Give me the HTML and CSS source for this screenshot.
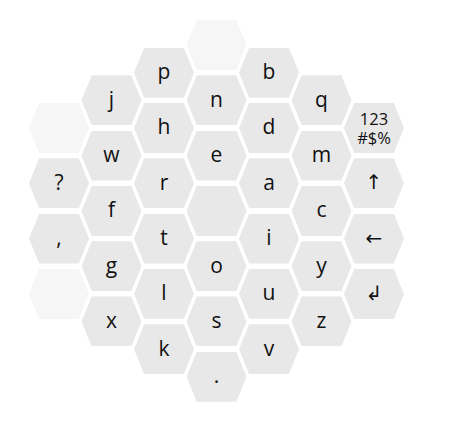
FILE: index.html
```html
<!DOCTYPE html>
<html lang="en">
<head>
    <meta charset="UTF-8">
    <meta name="viewport" content="width=device-width, initial-scale=1.0">
    <title>Hex Keyboard</title>
    <link rel="stylesheet" href="styles.css">
</head>
<body>
    <div class="board">
        <div class="col col-edge">
            <div class="hex hex-faint"></div>
            <div class="hex">?</div>
            <div class="hex">,</div>
            <div class="hex hex-faint"></div>
        </div>
        <div class="col col-side">
            <div class="hex">j</div>
            <div class="hex">w</div>
            <div class="hex">f</div>
            <div class="hex">g</div>
            <div class="hex">x</div>
        </div>
        <div class="col col-inner">
            <div class="hex">p</div>
            <div class="hex">h</div>
            <div class="hex">r</div>
            <div class="hex">t</div>
            <div class="hex">l</div>
            <div class="hex">k</div>
        </div>
        <div class="col col-center">
            <div class="hex hex-faint"></div>
            <div class="hex">n</div>
            <div class="hex">e</div>
            <div class="hex"></div>
            <div class="hex">o</div>
            <div class="hex">s</div>
            <div class="hex">.</div>
        </div>
        <div class="col col-inner">
            <div class="hex">b</div>
            <div class="hex">d</div>
            <div class="hex">a</div>
            <div class="hex">i</div>
            <div class="hex">u</div>
            <div class="hex">v</div>
        </div>
        <div class="col col-side">
            <div class="hex">q</div>
            <div class="hex">m</div>
            <div class="hex">c</div>
            <div class="hex">y</div>
            <div class="hex">z</div>
        </div>
        <div class="col col-edge">
            <div class="hex hex-small"><span>123</span><span>#$%</span></div>
            <div class="hex hex-icon">&#8593;</div>
            <div class="hex hex-icon">&#8592;</div>
            <div class="hex hex-icon">&#8626;</div>
        </div>
    </div>
</body>
</html>
```

FILE: styles.css
```css
:root {
    --key-color: #e8e8e8;
    --key-faint: #f6f6f6;
    --text-color: #111111;
}

* {
    margin: 0;
    padding: 0;
    box-sizing: border-box;
}

body {
    font-family: 'Open Sans', 'DejaVu Sans', sans-serif;
    background: #ffffff;
    color: var(--text-color);
}

.board {
    display: flex;
    align-items: flex-start;
    padding-left: 29px;
}

.col {
    display: flex;
    flex-direction: column;
    gap: 5.3px;
    margin-left: -7.5px;
}

.col:first-child {
    margin-left: 0;
}

/* each column sits half a key lower than its neighbour toward the centre */
.col-center { padding-top: 20px; }
.col-inner  { padding-top: 47.65px; }
.col-side   { padding-top: 75.3px; }
.col-edge   { padding-top: 103px; }

.hex {
    width: 60px;
    height: 50px;
    display: flex;
    align-items: center;
    justify-content: center;
    background: var(--key-color);
    clip-path: polygon(17% 0, 83% 0, 100% 50%, 83% 100%, 17% 100%, 0 50%);
    font-size: 21px;
    line-height: 1;
    padding-bottom: 2px;
}

.hex-faint {
    background: var(--key-faint);
}

.hex-small {
    flex-direction: column;
    gap: 4px;
    font-size: 16.5px;
    line-height: 15px;
    padding-bottom: 0;
}

.hex-small span {
    display: block;
    height: 15px;
}

.hex-icon {
    font-family: 'DejaVu Sans', sans-serif;
    font-size: 20px;
}
```
